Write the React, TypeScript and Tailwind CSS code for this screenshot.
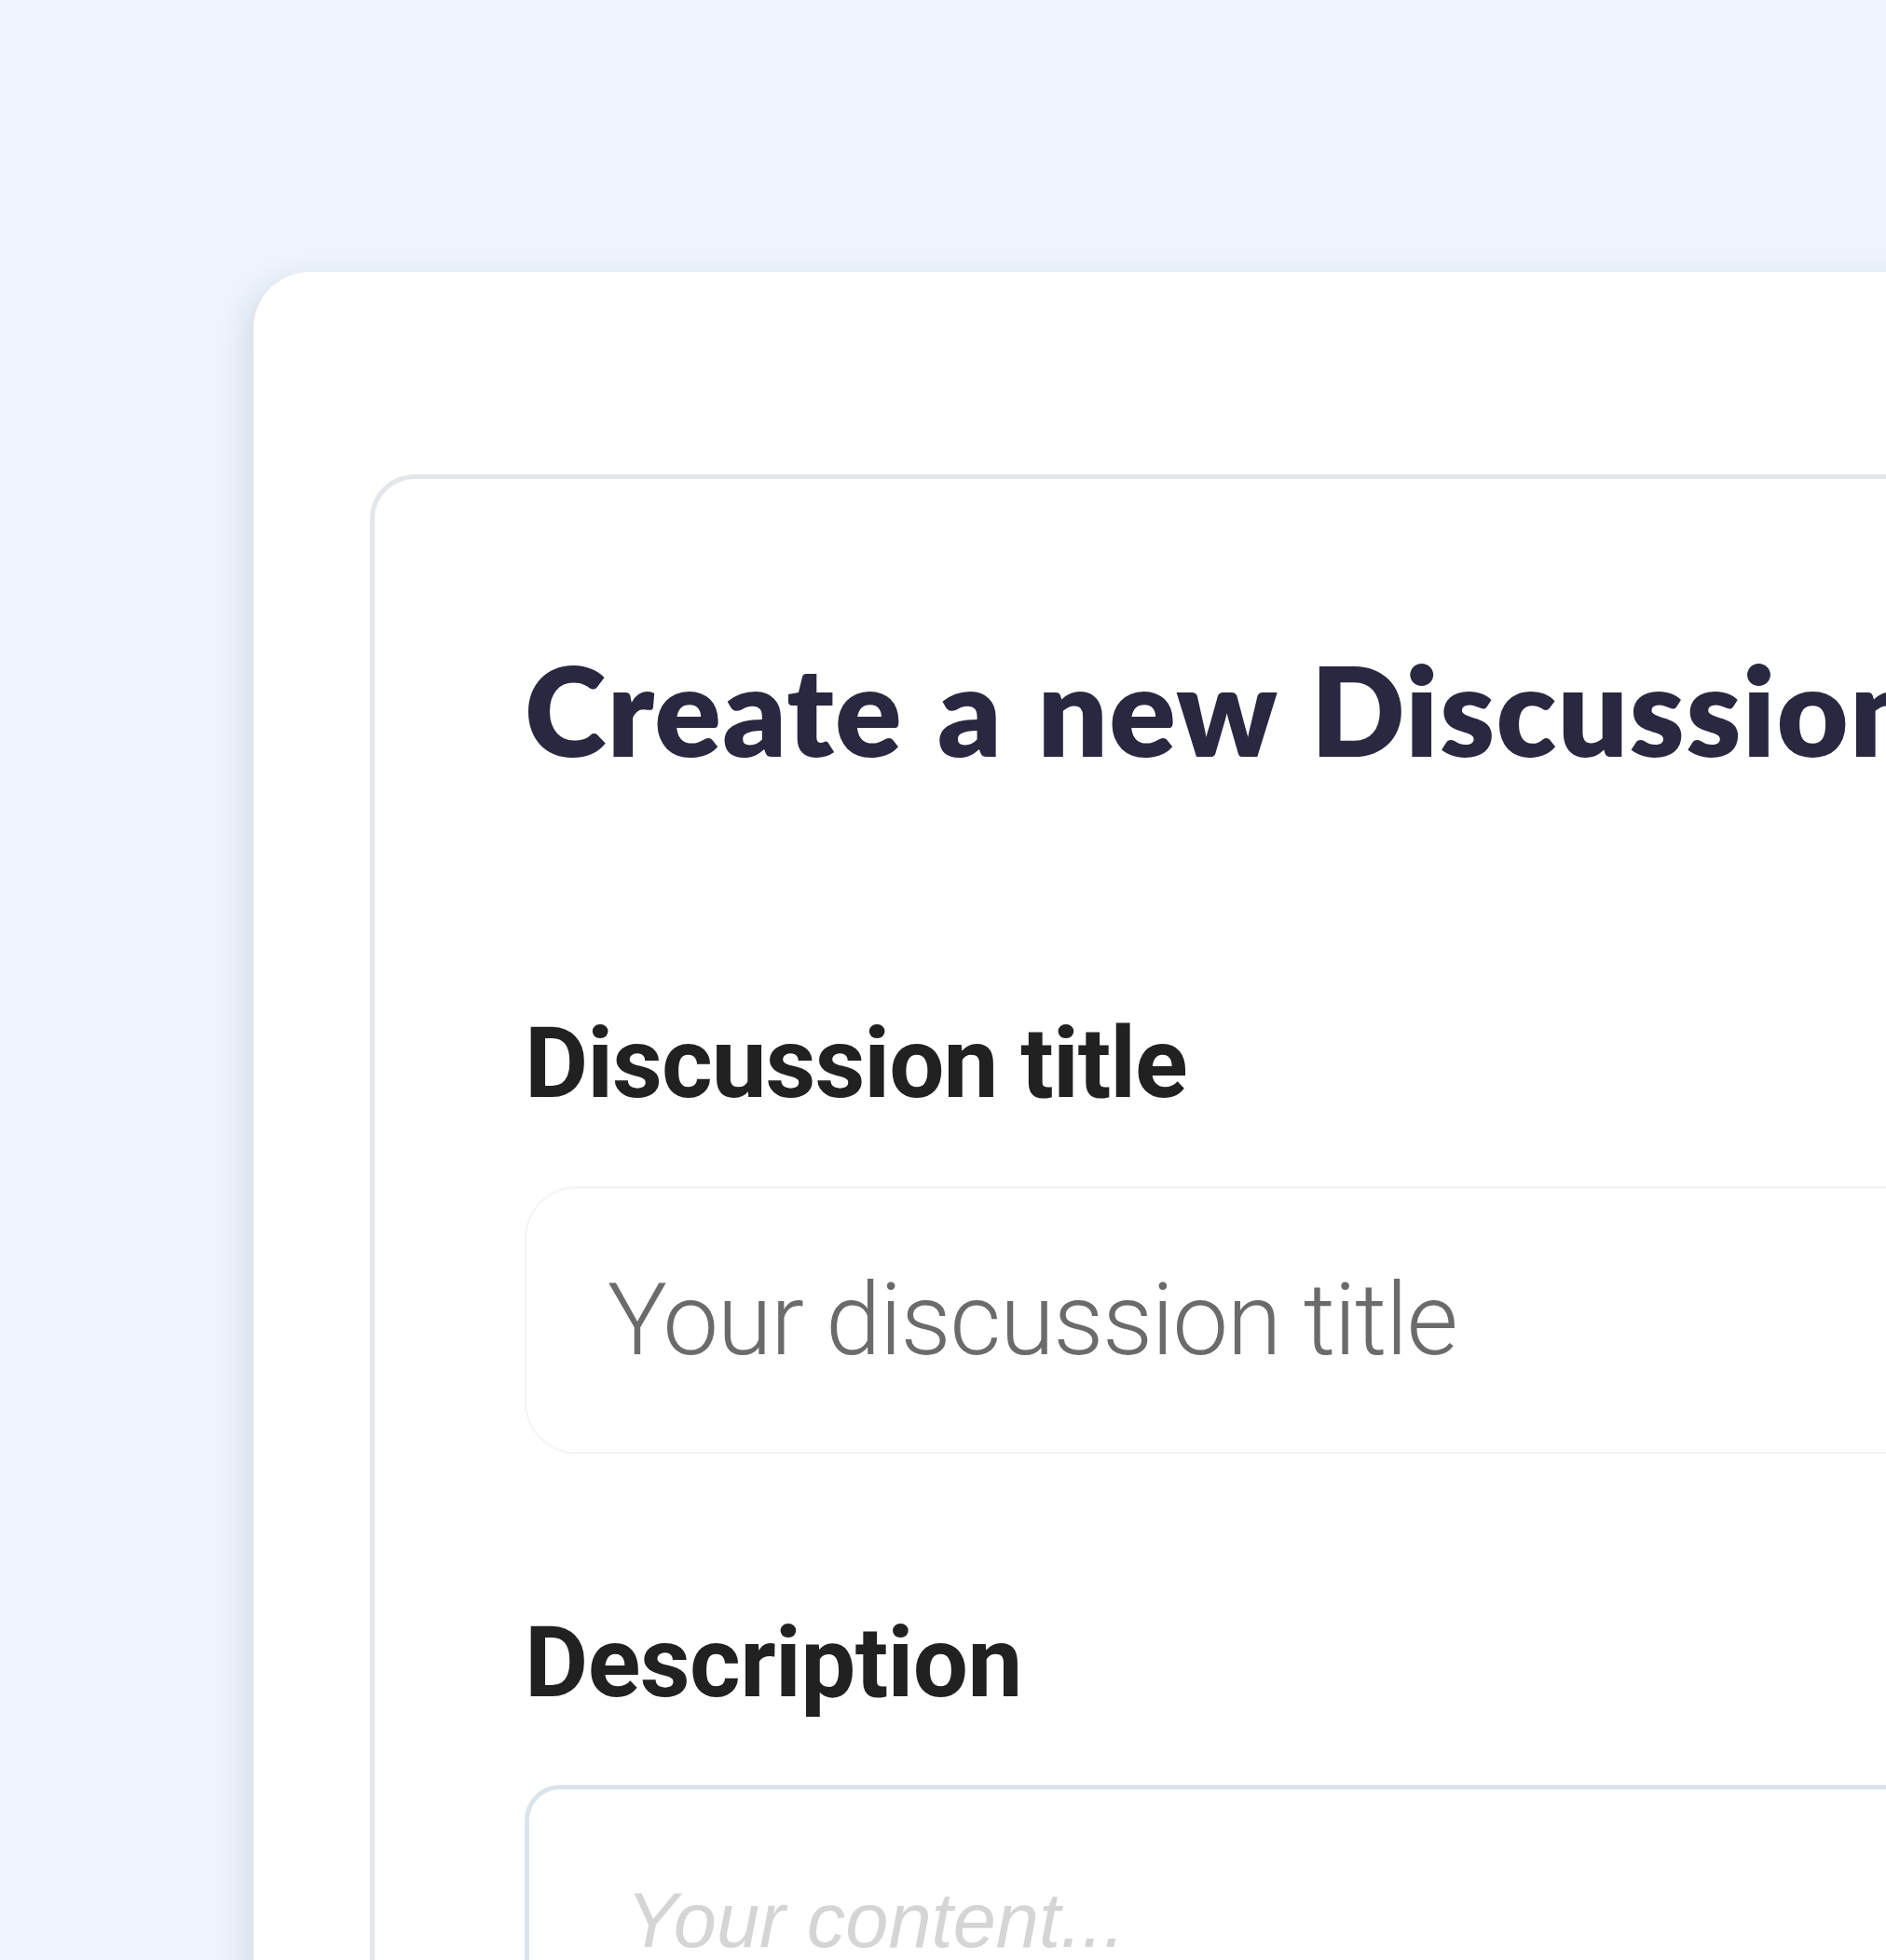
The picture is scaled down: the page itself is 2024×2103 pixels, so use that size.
import { useState } from "react";

export default function App() {
  const [title, setTitle] = useState("");
  const [content, setContent] = useState("");

  return (
    <div className="w-[2024px] h-[2103px] overflow-hidden bg-[#eff4fc] pt-[292px] pl-[272px]">
      <div className="w-[2400px] min-h-[2200px] bg-white rounded-[60px] shadow-[-10px_8px_30px_rgba(30,41,59,0.11)] pt-[217px] pl-[125px]">
        <div className="w-[2200px] min-h-[1900px] border-[5px] border-[#e3e6eb] rounded-[48px] pt-[180px] pl-[161px]">
          <h1 className="font-['Lato',sans-serif] font-extrabold text-[133px] leading-none tracking-[1.3px] [word-spacing:5px] text-[#2a2740] whitespace-nowrap">
            Create a new Discussion
          </h1>

          <label className="block mt-[262px] font-['Roboto',sans-serif] font-bold text-[105px] leading-none tracking-[-1px] text-[#212121]">
            Discussion title
          </label>
          <input
            value={title}
            onChange={(e) => setTitle(e.target.value)}
            placeholder="Your discussion title"
            className="mt-[79px] w-[1900px] h-[287px] border-2 border-[#f4f4f5] rounded-[56px] pl-[87px] font-['Roboto',sans-serif] font-light text-[107px] leading-none tracking-[-1.5px] text-[#333] placeholder:text-[#6b6b6b] outline-none"
          />

          <label className="block mt-[172px] font-['Roboto',sans-serif] font-bold text-[105px] leading-none tracking-[-0.6px] text-[#212121]">
            Description
          </label>
          <textarea
            value={content}
            onChange={(e) => setContent(e.target.value)}
            placeholder="Your content..."
            className="block mt-[78px] w-[1900px] h-[600px] border-[5px] border-[#dbe4eb] rounded-[38px] pt-[79px] pl-[104px] font-['Liberation_Sans',Arial,sans-serif] italic text-[83px] leading-normal placeholder:text-[#d5d5d5] outline-none resize-none"
          />
        </div>
      </div>
    </div>
  );
}
